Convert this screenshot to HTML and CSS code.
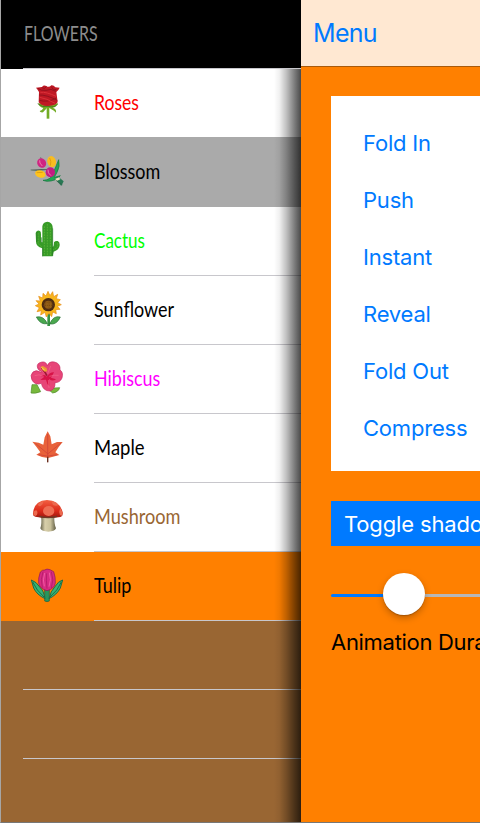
FILE: index.html
```html
<!DOCTYPE html>
<html lang="en">
<head>
<meta charset="utf-8">
<title>Flowers</title>
<link rel="stylesheet" href="styles.css">
</head>
<body>
<div class="screen">
<aside class="sidebar">
<header class="heading"><span class="condensed">FLOWERS</span></header>
<ul class="list">
<li class="row rose">
<svg class="icon" viewBox="0 -18 180 207">
<path d="M80 90h8v41h-8z" fill="#72ac25"/>
<path d="M55 84Q85 96 114 84Q110 97 98 98Q110 101 108 113L102 107Q93 103 88 99H81L69 112Q60 113 59 108Q67 106 70 99Q55 95 55 84Z" fill="#72ac25"/>
<path d="M53 86Q67 99 84 94Q105 99 113 87" fill="none" stroke="#37621c" stroke-width="2"/>
<path d="M48 38L66 36Q71 29 79 33Q86 39 94 31Q101 30 106 37L119 38Q115 47 109 51L113 81Q109 91 84 93Q64 94 56 82L57 51Q53 43 48 38Z" fill="#bf1824"/>
<path d="M54 40Q62 48 78 46Q93 39 108 49M57 60Q79 59 112 76M58 76Q81 83 108 70M65 38Q74 44 79 35M95 35Q97 46 109 43" fill="none" stroke="#8a101c" stroke-width="2.5"/>
<path d="M61 52Q79 50 108 64M59 67Q80 70 105 85" fill="none" stroke="#da3038" stroke-width="3"/>
</svg>
<span class="condensed">Roses</span></li>
<li class="row blossom">
<svg class="icon" viewBox="0 -21 180 207">
<path d="M69 106Q95 105 99 84Q107 67 116 44Q121 65 111 82L103 97L121 92Q108 109 80 109Z" fill="#24a453" stroke="#14743d" stroke-width="2"/>
<path d="M104 101L115 95L131 109L124 123Z" fill="#287954"/>
<path d="M106 101L117 97L121 103L109 109Z" fill="#e8ddbd"/>
<path d="M62 37L66 54M32 75L57 76L85 73M108 106L127 119" stroke="#315a45" stroke-width="2"/>
<ellipse cx="65" cy="54" rx="13" ry="15" transform="rotate(-30 65 54)" fill="#cf2581"/>
<ellipse cx="95" cy="50" rx="13" ry="17" transform="rotate(-15 95 50)" fill="#f8bc20"/>
<ellipse cx="61" cy="87" rx="16" ry="11" transform="rotate(15 61 87)" fill="#ffc31c"/>
<ellipse cx="91" cy="82" rx="14" ry="15" fill="#c51b82"/>
<path d="M59 46Q57 54 67 63M84 74Q82 84 93 92" fill="none" stroke="#ef76ac" stroke-width="3"/>
<path d="M89 39Q95 49 91 62M50 83L68 82" fill="none" stroke="#d18e0c" stroke-width="2"/>
</svg>
<span class="condensed">Blossom</span></li>
<li class="row cactus">
<svg class="icon" viewBox="0 -24 180 207">
<path d="M67 124V100Q47 94 48 79L47 54Q50 43 60 48Q64 51 63 64V81L67 82V34Q69 21 82 20Q97 22 98 36V96Q102 94 102 82Q105 77 113 78Q120 81 119 91Q118 105 101 110L98 124Z" fill="#379b27"/>
<path d="M73 34V119M82 27V121M91 35V120M54 54V81Q55 89 66 95M113 84V93Q110 101 99 104" fill="none" stroke="#58b137" stroke-width="3" stroke-dasharray="5 3"/>
<path d="M68 98V124M98 40V123M51 51V81M64 67V82" fill="none" stroke="#247324" stroke-width="2"/>
</svg>
<span class="condensed">Cactus</span></li>
<li class="row sunflower">
<svg class="icon" viewBox="0 -27 180 207">
<path d="M82 86h8v37h-8z" fill="#379442"/>
<path d="M49 96Q71 91 82 116Q61 120 49 96ZM121 96Q100 90 89 117Q111 120 121 96Z" fill="#49a84e" stroke="#276c35" stroke-width="2"/>
<path d="M84 19L90 32L98 20L101 35L113 28L109 41L121 44L113 53L124 59L112 64L120 73L107 74L109 86L98 81L95 95L87 84L79 96L75 82L62 90L64 77L51 80L58 68L46 62L57 57L48 47L61 48L56 34L68 39L69 25L78 33Z" fill="#f7b51c" stroke="#e58b16" stroke-width="2"/>
<circle cx="85" cy="59" r="20" fill="#4c2b12"/>
<circle cx="85" cy="59" r="12" fill="#946018"/>
<path d="M70 52h30M69 61h32M77 43v32M87 41v36M95 47v25" stroke="#70430d" stroke-width="2" stroke-dasharray="3 3"/>
</svg>
<span class="condensed">Sunflower</span></li>
<li class="row hibiscus">
<svg class="icon" viewBox="0 -21 180 207">
<path d="M36 98L51 98L62 119Q45 126 33 123ZM88 109L119 107Q116 120 98 123L87 114Z" fill="#78b83c" stroke="#4b8929" stroke-width="2"/>
<path d="M75 58Q55 61 52 45Q50 33 66 30Q79 28 82 42Q86 27 103 30Q122 34 120 54Q131 61 126 78Q120 92 105 92Q106 113 89 117Q69 117 64 94Q45 101 36 84Q29 69 39 60Q48 52 61 60Z" fill="#e74578" stroke="#c52b60" stroke-width="2"/>
<path d="M62 72Q76 65 80 74Q90 60 102 61Q97 71 93 77L108 82Q98 90 87 81L88 102Q80 96 78 83L61 84L72 75Z" fill="#d71347"/>
<path d="M58 43Q64 60 78 67M92 42L83 65M44 71Q57 65 71 73M116 70Q103 68 88 73M85 84L87 108" stroke="#f4668b" fill="none" stroke-width="2"/>
<path d="M64 47L71 55L81 71" fill="none" stroke="#9c1732" stroke-width="5"/>
<path d="M62 44L69 42L80 49L82 58L74 59L67 53Z" fill="#ec9b32"/><path d="M65 46L74 55" stroke="#ffdb68" stroke-width="3"/>
</svg>
<span class="condensed">Hibiscus</span></li>
<li class="row maple">
<svg class="icon" viewBox="0 -24 180 207">
<path d="M83 28L91 43L95 67L111 60L128 60L116 75L106 91L118 99L99 104L84 108L66 105L49 98L61 91L49 74L37 59L56 62L70 68L74 46Z" fill="#e8623a"/>
<path d="M83 36V121M83 95L46 64M83 96L123 63M82 102L55 98M84 102L112 98" fill="none" stroke="#cc4038" stroke-width="2"/>
<path d="M83 104V121" stroke="#663020" stroke-width="4"/>
</svg>
<span class="condensed">Maple</span></li>
<li class="row mushroom">
<svg class="icon" viewBox="0 -21 180 207">
<defs><linearGradient id="stem"><stop stop-color="#65624a"/><stop offset=".3" stop-color="#d8cfaa"/><stop offset=".65" stop-color="#c8c09a"/><stop offset="1" stop-color="#5e5b43"/></linearGradient>
<linearGradient id="cap" x2="0" y2="1"><stop stop-color="#f26042"/><stop offset=".6" stop-color="#dc2a19"/><stop offset="1" stop-color="#9e180f"/></linearGradient></defs>
<path d="M63 78H103Q102 101 108 115Q104 125 85 125Q65 125 61 115Q66 101 63 78Z" fill="url(#stem)"/>
<path d="M39 70Q42 32 81 30Q119 31 128 67Q130 79 121 81Q83 87 46 80Q38 78 39 70Z" fill="url(#cap)"/>
<path d="M58 79Q84 86 111 79" fill="none" stroke="#6b3c28" stroke-width="4"/>
<ellipse cx="86" cy="63" rx="17" ry="15" fill="#ee6d53"/>
<path d="M54 43Q62 34 70 33Q70 44 60 49Q53 48 54 43ZM94 33Q109 35 115 45Q110 50 99 45ZM40 66Q49 56 52 65Q54 76 46 78L40 75ZM121 54L128 68L125 78Q116 74 118 63Z" fill="#ec694e"/>
</svg>
<span class="condensed">Mushroom</span></li>
<li class="row tulip">
<svg class="icon" viewBox="0 -24 180 207">
<path d="M74 87H88V123Q81 127 74 123Z" fill="#28965c" stroke="#225f3f" stroke-width="2"/>
<path d="M34 60Q49 65 60 82Q71 92 75 116Q50 104 41 84ZM128 60Q115 63 104 81Q92 93 87 116Q111 104 121 84Z" fill="#36b476" stroke="#236b43" stroke-width="3"/>
<path d="M38 66Q49 91 73 112M124 66Q114 91 90 111" fill="none" stroke="#187049" stroke-width="3"/>
<path d="M56 69Q54 55 61 36Q67 29 74 30Q80 25 90 29L101 35Q107 51 106 69Q103 87 81 92Q60 87 56 69Z" fill="#d92b83" stroke="#8c1552" stroke-width="2"/>
<path d="M69 35Q60 58 67 83M94 35Q103 60 94 84M80 40Q78 60 81 86" fill="none" stroke="#a51a61" stroke-width="2"/>
<path d="M74 39Q67 60 73 79M88 38Q95 59 87 80" fill="none" stroke="#f05ba3" stroke-width="3"/>
</svg>
<span class="condensed">Tulip</span></li>
<li class="row empty"></li>
<li class="row empty"></li>
</ul>
<div class="fold"></div>
</aside>
<main class="content">
<nav class="navbar">Menu</nav>
<div class="controls">
<div class="card">
<div>Fold In</div><div>Push</div><div>Instant</div><div>Reveal</div><div>Fold Out</div><div>Compress</div>
</div>
<div class="toggle">Toggle shadow</div>
<div class="slider"><span class="filled"></span><span class="knob"></span><span class="track"></span></div>
<div class="caption">Animation Duration</div>
</div>
</main>
</div>
</body>
</html>
```
FILE: styles.css
```css
* { box-sizing: border-box; }
body { margin: 0; width: 480px; height: 823px; overflow: hidden; }
.screen { display: flex; width: 480px; height: 823px; border-left: 1px solid #a6a6a6; border-bottom: 1px solid #777; overflow: hidden; }
.sidebar { position: relative; width: 300px; flex: none; background: #996633; font-family: Lato, sans-serif; font-size: 22px; }
.heading { height: 69px; display: flex; align-items: center; padding: 0 0 4px 23px; color: #8c8c8c; background: linear-gradient(#c8c7cc, #c8c7cc) 22px 68px / 278px 1px no-repeat #000; }
.condensed { display: inline-block; transform: scaleX(.815); transform-origin: left center; white-space: nowrap; }
.heading .condensed { transform: scaleX(.725); }
.list { list-style: none; margin: 0; padding: 0; }
.row { display: flex; align-items: center; height: 69px; padding-left: 19px; background: linear-gradient(#c8c7cc, #c8c7cc) 93px 68px / 207px 1px no-repeat #fff; }
.row .condensed { margin-bottom: 4px; }
.icon { width: 60px; height: 69px; margin-right: 14px; flex: none; }
.rose { color: #f00; background: #fff; }
.rose .condensed { transform: scaleX(.8); }
.blossom { background: #aaa; box-shadow: 0 -1px #aaa; }
.cactus { color: #0f0; }
.cactus .condensed { transform: scaleX(.775); }
.hibiscus { color: #f0f; }
.maple .condensed { transform: scaleX(.84); }
.mushroom { color: #996633; }
.mushroom .condensed { transform: scaleX(.825); }
.tulip { background-color: #ff8000; }
.empty { background: linear-gradient(#c8c7cc, #c8c7cc) 22px 68px / 278px 1px no-repeat; }
.fold { position: absolute; top: 69px; right: 0; bottom: 0; width: 27px; background: linear-gradient(90deg, rgba(0,0,0,0), rgba(0,0,0,.06) 20%, rgba(0,0,0,.24) 45%, rgba(0,0,0,.5) 75%, rgba(0,0,0,.71)); }
.content { width: 179px; flex: none; background: #ff8000; overflow: hidden; font: 22px Inter, sans-serif; white-space: nowrap; }
.navbar { height: 67px; padding-left: 12px; line-height: 67px; background: #ffe8d2; border-bottom: 1px solid #a85a0c; color: #007aff; font-size: 25px; letter-spacing: -.7px; }
.controls { margin: 29px 0 0 30px; }
.card { height: 375px; background: #fff; color: #007aff; padding: 19px 0 0 32px; line-height: 57px; letter-spacing: -.2px; }
.toggle { margin-top: 30px; height: 45px; line-height: 47px; padding-left: 13px; background: #007aff; color: #fff; letter-spacing: -.15px; }
.slider { display: flex; align-items: center; height: 42px; margin-top: 27px; }
.filled { width: 52px; height: 3px; margin-top: 2px; border-radius: 2px 0 0 2px; background: #007aff; }
.knob { width: 42px; height: 42px; border-radius: 50%; background: #fff; box-shadow: 0 3px 7px rgba(0,0,0,.25), 0 1px 1px rgba(0,0,0,.2); z-index: 1; }
.track { flex: 1; height: 3px; margin-top: 2px; background: #b7b7b7; }
.caption { margin-top: 12px; line-height: 30px; color: #000; letter-spacing: -.3px; }
```
